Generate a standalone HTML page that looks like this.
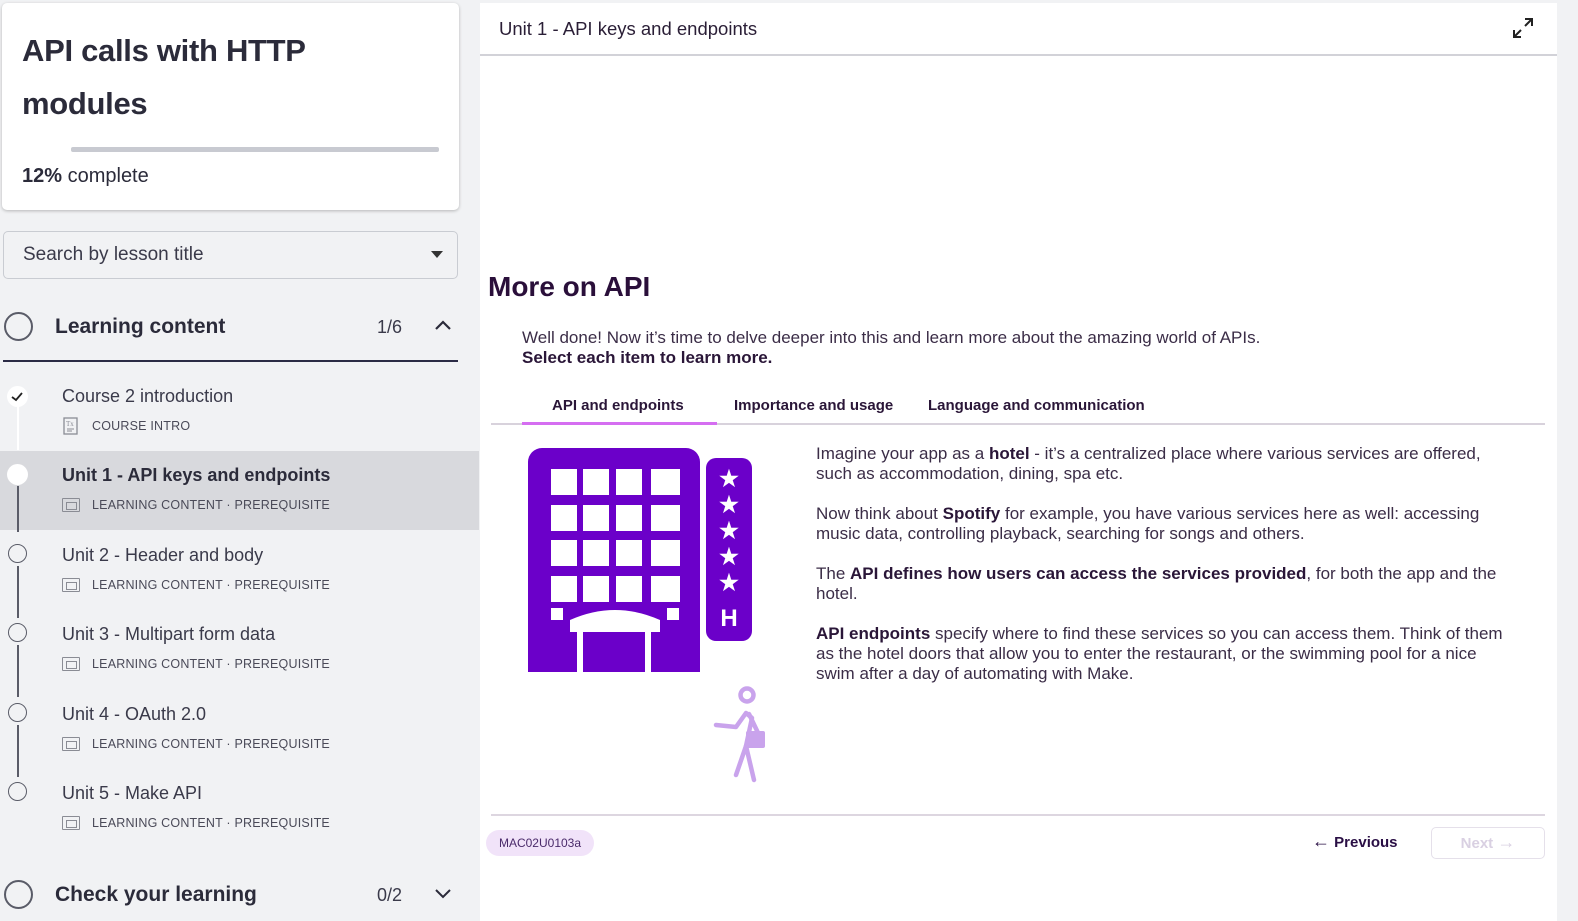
<!DOCTYPE html>
<html><head><meta charset="utf-8"><style>
*{box-sizing:border-box;margin:0;padding:0}
body{width:1578px;height:921px;overflow:hidden;background:#f1f2f4;font-family:"Liberation Sans",sans-serif;position:relative;color:#2b2b3a}
.abs{position:absolute;white-space:nowrap}
.card{position:absolute;left:2px;top:3px;width:457px;height:207px;background:#fff;border-radius:5px;box-shadow:0 1px 3px rgba(0,0,0,.25)}
.search{position:absolute;left:3px;top:231px;width:455px;height:48px;border:1px solid #c9ccd2;border-radius:5px;background:#f1f2f4}
.t{font-size:18px;color:#3a3a4a}
.sub{font-size:12.5px;color:#4a4a58;letter-spacing:.2px}
.ic{position:absolute;width:18px;height:14px;border:1.5px solid #8a8c94;border-radius:1px}
.ic:after{content:"";position:absolute;left:3px;top:3px;width:9px;height:6px;border:1.3px solid #8a8c94}
.dot{position:absolute;left:8px;width:19px;height:19px;border-radius:50%;border:1.5px solid #5a5c68;background:#f1f2f4}
.vl{position:absolute;left:16.5px;width:2px;background:#5a5c68}
.right{position:absolute;left:480px;top:3px;width:1077px;height:918px;background:#fff}
.p{font-size:17px;color:#3b2d47;line-height:20px}
b{color:#2a1638}
</style></head><body>
<div class="card"></div>
<div class="abs" style="left:22px;top:24px;font-size:31px;line-height:53px;color:#2b2b3a;font-weight:bold;letter-spacing:-0.3px">API calls with HTTP<br>modules</div>
<div class="abs" style="left:71px;top:147px;width:368px;height:5px;background:#c8cad1;border-radius:2px"></div>
<div class="abs" style="left:22px;top:165px;font-size:20px;color:#2b2b3a"><span style="font-weight:bold">12%</span> complete</div>
<div class="search"></div>
<div class="abs" style="left:23px;top:244px;font-size:19px;color:#3a3a4a">Search by lesson title</div>
<div class="abs" style="left:431px;top:251px;width:0;height:0;border-left:6px solid transparent;border-right:6px solid transparent;border-top:7px solid #333"></div>
<div class="abs" style="left:4px;top:312px;width:29px;height:29px;border-radius:50%;border:2.5px solid #5a5c68"></div>
<div class="abs" style="left:55px;top:315px;font-size:21px;font-weight:bold;color:#2b2b3a">Learning content</div>
<div class="abs" style="left:377px;top:317px;font-size:18px;color:#3a3a4a">1/6</div>
<svg class="abs" style="left:434px;top:319px" width="18" height="12"><path d="M2 10 L9 3 L16 10" fill="none" stroke="#2b2b3a" stroke-width="2.2"/></svg>
<div class="abs" style="left:3px;top:360px;width:455px;height:2px;background:#2b2b45"></div>
<div class="abs" style="left:0;top:451px;width:479px;height:79px;background:#d8d9dd"></div>
<div class="vl" style="top:406px;height:44px;background:#fff"></div>
<div class="vl" style="top:486px;height:46px"></div>
<div class="vl" style="top:566px;height:52px"></div>
<div class="vl" style="top:645px;height:52px"></div>
<div class="vl" style="top:725px;height:52px"></div>
<div class="abs" style="left:7px;top:386px;width:21px;height:21px;border-radius:50%;background:#fff"></div>
<svg class="abs" style="left:11px;top:391px" width="13" height="11"><path d="M1 6 L5 9 L11 2" fill="none" stroke="#222" stroke-width="1.8"/></svg>
<div class="abs" style="left:7px;top:464px;width:21px;height:21px;border-radius:50%;background:#fff"></div>
<div class="dot" style="top:544px"></div>
<div class="dot" style="top:623px"></div>
<div class="dot" style="top:703px"></div>
<div class="dot" style="top:782px"></div>

<div class="abs t" style="left:62px;top:386px">Course 2 introduction</div>
<svg class="abs" style="left:63px;top:417px" width="16" height="19"><rect x="1" y="1" width="13" height="16" fill="none" stroke="#8a8c94" stroke-width="1.3"/><text x="3" y="9" font-size="7" fill="#8a8c94" font-family="Liberation Serif">Tx</text><path d="M4 12h7M4 14h5" stroke="#8a8c94"/></svg>
<div class="abs sub" style="left:92px;top:419px">COURSE INTRO</div>

<div class="abs t" style="left:62px;top:465px;font-weight:bold;color:#2b2b3a">Unit 1 - API keys and endpoints</div>
<div class="ic" style="left:62px;top:498px"></div><div class="abs sub" style="left:92px;top:498px">LEARNING CONTENT · PREREQUISITE</div>
<div class="abs t" style="left:62px;top:545px">Unit 2 - Header and body</div>
<div class="ic" style="left:62px;top:578px"></div><div class="abs sub" style="left:92px;top:578px">LEARNING CONTENT · PREREQUISITE</div>
<div class="abs t" style="left:62px;top:624px">Unit 3 - Multipart form data</div>
<div class="ic" style="left:62px;top:657px"></div><div class="abs sub" style="left:92px;top:657px">LEARNING CONTENT · PREREQUISITE</div>
<div class="abs t" style="left:62px;top:704px">Unit 4 - OAuth 2.0</div>
<div class="ic" style="left:62px;top:737px"></div><div class="abs sub" style="left:92px;top:737px">LEARNING CONTENT · PREREQUISITE</div>
<div class="abs t" style="left:62px;top:783px">Unit 5 - Make API</div>
<div class="ic" style="left:62px;top:816px"></div><div class="abs sub" style="left:92px;top:816px">LEARNING CONTENT · PREREQUISITE</div>

<div class="abs" style="left:4px;top:880px;width:29px;height:29px;border-radius:50%;border:2.5px solid #5a5c68"></div>
<div class="abs" style="left:55px;top:883px;font-size:21px;font-weight:bold;color:#2b2b3a">Check your learning</div>
<div class="abs" style="left:377px;top:885px;font-size:18px;color:#3a3a4a">0/2</div>
<svg class="abs" style="left:434px;top:888px" width="18" height="12"><path d="M2 2 L9 9 L16 2" fill="none" stroke="#2b2b3a" stroke-width="2"/></svg>

<div class="right"></div>
<div class="abs" style="left:499px;top:18px;font-size:18.5px;color:#2a1e36">Unit 1 - API keys and endpoints</div>
<svg class="abs" style="left:1512px;top:17px" width="22" height="22"><path d="M13 2h7v7M20 2l-7 7M9 20H2v-7M2 20l7-7" fill="none" stroke="#222" stroke-width="2"/></svg>
<div class="abs" style="left:480px;top:54px;width:1077px;height:1.5px;background:#d2d2d8"></div>

<div class="abs" style="left:488px;top:271px;font-size:28px;font-weight:bold;color:#2a0f3a">More on API</div>
<div class="abs p" style="left:522px;top:328px">Well done! Now it’s time to delve deeper into this and learn more about the amazing world of APIs.<br><b>Select each item to learn more.</b></div>
<div class="abs" style="left:552px;top:397px;font-size:15px;font-weight:bold;color:#2a1638">API and endpoints</div>
<div class="abs" style="left:734px;top:397px;font-size:15px;font-weight:bold;color:#2a1638">Importance and usage</div>
<div class="abs" style="left:928px;top:397px;font-size:15px;font-weight:bold;color:#2a1638">Language and communication</div>
<div class="abs" style="left:491px;top:423px;width:1054px;height:1.5px;background:#d8d2dc"></div>
<div class="abs" style="left:522px;top:422px;width:195px;height:3px;background:#d56ef1"></div>

<svg class="abs" style="left:520px;top:440px" width="260" height="355">
<rect x="8" y="8" width="172" height="224" rx="14" fill="#6b00c9"/>
<rect x="8" y="200" width="172" height="32" fill="#6b00c9"/>
<g fill="#fff">
<rect x="31" y="29" width="26" height="26"/><rect x="63" y="29" width="26" height="26"/><rect x="96" y="29" width="26" height="26"/><rect x="131" y="29" width="29" height="26"/>
<rect x="31" y="65" width="26" height="26"/><rect x="63" y="65" width="26" height="26"/><rect x="96" y="65" width="26" height="26"/><rect x="131" y="65" width="29" height="26"/>
<rect x="31" y="100" width="26" height="26"/><rect x="63" y="100" width="26" height="26"/><rect x="96" y="100" width="26" height="26"/><rect x="131" y="100" width="29" height="26"/>
<rect x="31" y="136" width="26" height="26"/><rect x="63" y="136" width="26" height="26"/><rect x="96" y="136" width="26" height="26"/><rect x="131" y="136" width="29" height="26"/>
<rect x="31" y="168" width="12" height="12"/><rect x="147" y="168" width="12" height="12"/>
<path d="M50 180 Q95 160 140 180 V192 H50Z"/>
<rect x="57" y="185" width="6" height="47"/><rect x="125" y="185" width="6" height="47"/>
</g>
<rect x="186" y="18" width="46" height="183" rx="10" fill="#6b00c9"/>
<g fill="#fff" font-family="Liberation Sans" font-size="22" font-weight="bold" text-anchor="middle">
<text x="209" y="46">★</text><text x="209" y="72">★</text><text x="209" y="98">★</text><text x="209" y="124">★</text><text x="209" y="150">★</text>
<text x="209" y="186" font-size="24">H</text></g>
<g fill="none" stroke="#c9a3ec" stroke-width="4.5" stroke-linecap="round" stroke-linejoin="round">
<circle cx="227" cy="255" r="6.5"/>
<path d="M196 285 L216 287 L226 273 L232 278 L226 306"/>
<path d="M226 306 L216 335 M226 306 L234 340"/>
<path d="M229 274 L240 297"/>
</g>
<rect x="226" y="291" width="19" height="17" rx="2" fill="#c9a3ec"/>
</svg>

<div class="abs p" style="left:816px;top:444px">Imagine your app as a <b>hotel</b> - it’s a centralized place where various services are offered,<br>such as accommodation, dining, spa etc.</div>
<div class="abs p" style="left:816px;top:504px">Now think about <b>Spotify</b> for example, you have various services here as well: accessing<br>music data, controlling playback, searching for songs and others.</div>
<div class="abs p" style="left:816px;top:564px">The <b>API defines how users can access the services provided</b>, for both the app and the<br>hotel.</div>
<div class="abs p" style="left:816px;top:624px"><b>API endpoints</b> specify where to find these services so you can access them. Think of them<br>as the hotel doors that allow you to enter the restaurant, or the swimming pool for a nice<br>swim after a day of automating with Make.</div>

<div class="abs" style="left:491px;top:814px;width:1054px;height:1.5px;background:#ddd6e0"></div>
<div class="abs" style="left:486px;top:830px;width:108px;height:26px;border-radius:13px;background:#f1e3f9;font-size:12px;color:#4a2a6a;text-align:center;line-height:26px">MAC02U0103a</div>
<div class="abs" style="left:1312px;top:834px;font-size:15px;font-weight:bold;color:#2a0f45"><span style="font-size:18px;line-height:15px">←</span> Previous</div>
<div class="abs" style="left:1431px;top:827px;width:114px;height:32px;border:1.5px solid #e5e0ea;border-radius:5px;font-size:15px;color:#d9d0e2;font-weight:bold;text-align:center;line-height:29px">Next <span style="font-size:18px">→</span></div>
<div class="abs" style="left:1557px;top:0;width:21px;height:921px;background:#f1f2f4"></div>
</body></html>
